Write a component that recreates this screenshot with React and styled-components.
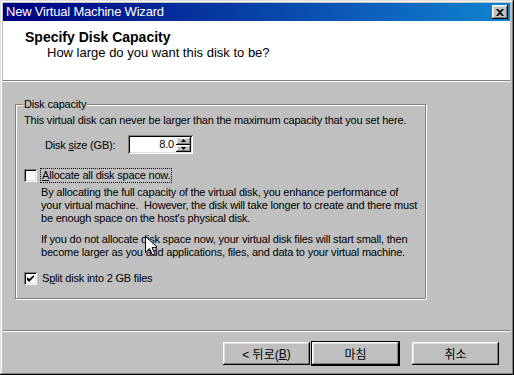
import styled, { createGlobalStyle } from "styled-components";

const GlobalStyle = createGlobalStyle`
  html, body {
    margin: 0;
    padding: 0;
    background: #c0c0c0;
  }
  * {
    box-sizing: border-box;
  }
`;

const FONT = `"Liberation Sans", Arial, "Noto Sans CJK KR", sans-serif`;

const raised = `
  box-shadow: inset -1px -1px 0 #000, inset 1px 1px 0 #fff,
    inset -2px -2px 0 #808080, inset 2px 2px 0 #dfdfdf;
`;

const sunken = `
  box-shadow: inset 1px 1px 0 #808080, inset -1px -1px 0 #fff,
    inset 2px 2px 0 #000, inset -2px -2px 0 #dfdfdf;
`;

const Window = styled.div`
  position: relative;
  width: 514px;
  height: 375px;
  display: flex;
  flex-direction: column;
  padding: 3px 4px 3px 3px;
  background: #c0c0c0;
  font-family: ${FONT};
  color: #000;
  box-shadow: inset -1px -1px 0 #000, inset 1px 1px 0 #dfdfdf,
    inset -2px -2px 0 #808080, inset 2px 2px 0 #fff;
`;

const TitleBar = styled.div`
  height: 18px;
  display: flex;
  align-items: center;
  justify-content: space-between;
  padding: 0 2px 0 3px;
  background: linear-gradient(90deg, #000080, #1084d0);
`;

const TitleText = styled.span`
  color: #fff;
  font-size: 13px;
  letter-spacing: -0.2px;
  line-height: 16px;
`;

const CloseButton = styled.div`
  width: 16px;
  height: 14px;
  display: flex;
  align-items: center;
  justify-content: center;
  background: #c0c0c0;
  ${raised}
`;

const Header = styled.div`
  height: 61px;
  padding: 8px 0 0 22px;
  background: #fff;
  border-bottom: 1px solid #fff;
  box-shadow: inset 0 -1px 0 #808080;
`;

const HeaderTitle = styled.div`
  font-size: 14px;
  font-weight: bold;
  line-height: 16px;
`;

const HeaderSub = styled.div`
  margin-left: 22px;
  font-size: 13px;
  line-height: 15px;
`;

const Body = styled.div`
  flex: 1;
  padding: 15px 0 0 12px;
`;

const Group = styled.fieldset`
  width: 411px;
  margin: 0;
  padding: 0 8px 12px 8px;
  min-width: 0;
  border: 1px solid #808080;
  box-shadow: 1px 1px 0 #fff, inset 1px 1px 0 #fff;
  font-size: 11px;
  letter-spacing: -0.2px;
`;

const Legend = styled.legend`
  padding: 0 1px;
  margin-left: -1px;
  line-height: 14px;
  background: #c0c0c0;
`;

const Text = styled.p`
  margin: ${(p) => p.$mt || 0}px 0 0 ${(p) => p.$ml || 0}px;
  line-height: 13px;
  white-space: nowrap;
`;

const SizeRow = styled.div`
  display: flex;
  align-items: center;
  margin: 8px 0 0 21px;
  height: 19px;
`;

const SizeLabel = styled.span`
  width: 83px;
`;

const Field = styled.div`
  display: flex;
  width: 65px;
  height: 19px;
  padding: 2px;
  ${sunken}
`;

const FieldValue = styled.div`
  flex: 1;
  background: #fff;
  text-align: right;
  line-height: 15px;
  padding-right: 2px;
`;

const Spinner = styled.div`
  width: 15px;
  display: flex;
  flex-direction: column;
`;

const SpinButton = styled.div`
  flex: 1;
  display: flex;
  align-items: center;
  justify-content: center;
  background: #c0c0c0;
  ${raised}
`;

const CheckRow = styled.div`
  display: flex;
  align-items: center;
  height: 15px;
  margin-top: ${(p) => p.$mt}px;
`;

const Box = styled.div`
  width: 13px;
  height: 13px;
  margin-right: 4px;
  display: flex;
  align-items: center;
  justify-content: center;
  background: #fff;
  ${sunken}
`;

const CheckLabel = styled.span`
  padding: 0 1px;
  line-height: 13px;
  outline: ${(p) => (p.$focus ? "1px dotted #000" : "none")};
`;

const Key = styled.span`
  text-decoration: underline;
`;

const Footer = styled.div`
  display: flex;
  justify-content: flex-end;
  align-items: center;
  padding: 11px 11px 7px 0;
  border-top: 1px solid #808080;
  box-shadow: inset 0 1px 0 #fff;
`;

const Button = styled.div`
  width: 87px;
  height: 23px;
  display: flex;
  align-items: center;
  justify-content: center;
  margin-left: ${(p) => p.$ml || 0}px;
  font-size: 12px;
  background: #c0c0c0;
  ${raised}
  outline: ${(p) => (p.$default ? "1px solid #000" : "none")};
`;

const Cursor = styled.svg`
  position: absolute;
  left: 145px;
  top: 236px;
`;

function Checkbox({ checked, focus, children, mt }) {
  return (
    <CheckRow $mt={mt}>
      <Box>
        {checked && (
          <svg width="7" height="7" viewBox="0 0 7 7">
            <path d="M0 2v3l2 2 5-5V0L2 4z" fill="#000" />
          </svg>
        )}
      </Box>
      <CheckLabel $focus={focus}>{children}</CheckLabel>
    </CheckRow>
  );
}

export default function App() {
  return (
    <>
      <GlobalStyle />
      <Window>
        <TitleBar>
          <TitleText>New Virtual Machine Wizard</TitleText>
          <CloseButton>
            <svg width="8" height="7" viewBox="0 0 8 7">
              <path d="M0 0h2l2 2 2-2h2L5 3.5 8 7H6L4 5 2 7H0l3-3.5z" fill="#000" />
            </svg>
          </CloseButton>
        </TitleBar>
        <Header>
          <HeaderTitle>Specify Disk Capacity</HeaderTitle>
          <HeaderSub>How large do you want this disk to be?</HeaderSub>
        </Header>
        <Body>
          <Group>
            <Legend>Disk capacity</Legend>
            <Text $mt={3}>
              This virtual disk can never be larger than the maximum capacity that you set here.
            </Text>
            <SizeRow>
              <SizeLabel>
                Disk <Key>s</Key>ize (GB):
              </SizeLabel>
              <Field>
                <FieldValue>8.0</FieldValue>
                <Spinner>
                  <SpinButton>
                    <svg width="5" height="3" viewBox="0 0 5 3">
                      <path d="M2.5 0L5 3H0z" fill="#000" />
                    </svg>
                  </SpinButton>
                  <SpinButton>
                    <svg width="5" height="3" viewBox="0 0 5 3">
                      <path d="M0 0h5L2.5 3z" fill="#000" />
                    </svg>
                  </SpinButton>
                </Spinner>
              </Field>
            </SizeRow>
            <Checkbox mt={14} focus>
              <Key>A</Key>llocate all disk space now.
            </Checkbox>
            <Text $mt={3} $ml={17}>
              By allocating the full capacity of the virtual disk, you enhance performance of
              <br />
              your virtual machine.&nbsp; However, the disk will take longer to create and there must
              <br />
              be enough space on the host's physical disk.
            </Text>
            <Text $mt={8} $ml={17}>
              If you do not allocate disk space now, your virtual disk files will start small, then
              <br />
              become larger as you add applications, files, and data to your virtual machine.
            </Text>
            <Checkbox mt={12} checked>
              S<Key>p</Key>lit disk into 2 GB files
            </Checkbox>
          </Group>
        </Body>
        <Footer>
          <Button>
            &lt; 뒤로(<Key>B</Key>)
          </Button>
          <Button $default $ml={2}>
            마침
          </Button>
          <Button $ml={13}>취소</Button>
        </Footer>
        <Cursor width="12" height="20" viewBox="0 0 12 20">
          <path
            d="M0.5 0.5v16l4-4 3 6.5 2.5-1-3-6.5h5.5z"
            fill="#fff"
            stroke="#000"
            strokeWidth="1"
          />
        </Cursor>
      </Window>
    </>
  );
}
